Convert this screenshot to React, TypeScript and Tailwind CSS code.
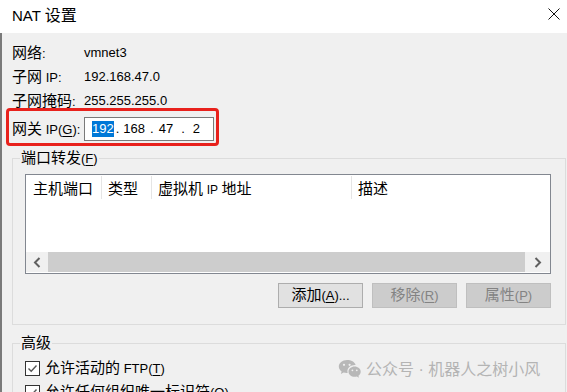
import React from "react";

const CJK_SPLIT = /([\u2E80-\u9FFF\uF900-\uFAFF\uFF01-\uFF60\u3000-\u303F]+)/;
const CJK_TEST = /^[\u2E80-\u9FFF\uF900-\uFAFF\uFF01-\uFF60\u3000-\u303F]+$/;

function T({ s }: { s: string }) {
  const parts = s.split(CJK_SPLIT);
  return (
    <>
      {parts.map((p, i) =>
        p === "" ? null : CJK_TEST.test(p) ? (
          <span key={i} className="text-[15px]">
            {p}
          </span>
        ) : (
          <span key={i}>{p}</span>
        )
      )}
    </>
  );
}

function U({ c }: { c: string }) {
  return <span className="underline underline-offset-[2px]">{c}</span>;
}

function Chevron({ dir }: { dir: "left" | "right" }) {
  return (
    <svg width="8" height="11" viewBox="0 0 8 11" fill="none">
      {dir === "left" ? (
        <polyline points="6.5,1 2,5.5 6.5,10" stroke="#606060" strokeWidth="2" />
      ) : (
        <polyline points="1.5,1 6,5.5 1.5,10" stroke="#606060" strokeWidth="2" />
      )}
    </svg>
  );
}

function Check() {
  return (
    <div className="w-[15px] h-[15px] border border-[#333333] bg-white flex items-center justify-center">
      <svg width="13" height="13" viewBox="0 0 13 13" fill="none">
        <polyline points="2.5,6.5 5.2,9.2 10.5,3.5" stroke="#555555" strokeWidth="1.4" />
      </svg>
    </div>
  );
}

export default function App() {
  return (
    <div className="w-[567px] h-[392px] overflow-hidden bg-[#f0f0f0] relative text-black text-[13px] leading-[18px] font-[family-name:'Liberation_Sans','Noto_Sans_CJK_SC',sans-serif]">
      {/* title bar */}
      <div className="h-[33px] bg-white flex justify-between pl-[12px] pr-[7px]">
        <div className="self-center pb-[2px] text-[15px]">
          NAT <span className="text-[16px]">设置</span>
        </div>
        <svg className="mt-[8px]" width="12" height="12" viewBox="0 0 12 12" fill="none">
          <line x1="0.5" y1="0.5" x2="11.5" y2="11.5" stroke="#111" strokeWidth="1" />
          <line x1="11.5" y1="0.5" x2="0.5" y2="11.5" stroke="#111" strokeWidth="1" />
        </svg>
      </div>

      {/* body */}
      <div className="border-l-2 border-[#7a7a7a] pl-[4px] pr-[1px] pt-[13px] h-[359px]">
        <div className="flex flex-col gap-[10px]">
          <div className="h-[14px] ml-[6px] flex items-center">
            <div className="w-[72px]">
              <T s="网络:" />
            </div>
            <div>vmnet3</div>
          </div>
          <div className="h-[14px] ml-[6px] flex items-center">
            <div className="w-[72px]">
              <T s="子网 IP:" />
            </div>
            <div>192.168.47.0</div>
          </div>
          <div className="h-[14px] ml-[6px] flex items-center">
            <div className="w-[72px]">
              <T s="子网掩码:" />
            </div>
            <div>255.255.255.0</div>
          </div>
        </div>

        {/* gateway row with red highlight */}
        <div className="w-[213px] h-[38px] border-[3px] border-[#e8211c] rounded-[4px] pl-[3px] pt-[6px] flex items-start">
          <div className="w-[72px] h-[24px] flex items-center">
            <span>
              <T s="网关 IP(" />
              <U c="G" />
              <span>):</span>
            </span>
          </div>
          <div className="w-[130px] h-[24px] border border-[#7a7a7a] bg-white flex items-center pl-[7px]">
            <span className="bg-[#0078d7] text-white leading-[16px]">192</span>
            <span className="ml-[2px]">.</span>
            <span className="ml-[4px]">168</span>
            <span className="ml-[5px]">.</span>
            <span className="ml-[5px]">47</span>
            <span className="ml-[8px]">.</span>
            <span className="ml-[8px]">2</span>
          </div>
        </div>

        {/* port forwarding */}
        <fieldset className="mt-[3px] ml-[6px] border border-[#dcdcdc]">
          <legend className="ml-[7px] px-[1px] leading-[18px]">
            <T s="端口转发(" />
            <U c="F" />
            <span>)</span>
          </legend>
          <div className="pl-[12px] pr-[14px] pt-[6px] pb-[16px]">
            <div className="h-[100px] border border-[#828790] bg-white flex flex-col">
              <div className="h-[25px] flex">
                <div className="w-[75px] pl-[7px] pt-[3px] flex items-center">
                  <span>
                    <T s="主机端口" />
                  </span>
                </div>
                <div className="w-px h-[23px] bg-[#e5e5e5] self-center" />
                <div className="w-[49px] pl-[6px] pt-[3px] flex items-center">
                  <span>
                    <T s="类型" />
                  </span>
                </div>
                <div className="w-px h-[23px] bg-[#e5e5e5] self-center" />
                <div className="w-[199px] pl-[6px] pt-[3px] flex items-center">
                  <span>
                    <T s="虚拟机 " />
                    <span className="text-[12px]">IP</span>
                    <T s=" 地址" />
                  </span>
                </div>
                <div className="w-px h-[23px] bg-[#e5e5e5] self-center" />
                <div className="flex-1 pl-[6px] pt-[3px] flex items-center">
                  <span>
                    <T s="描述" />
                  </span>
                </div>
              </div>
              <div className="flex-1" />
              <div className="h-[20px] mb-px flex">
                <div className="w-[22px] bg-[#f0f0f0] flex items-center justify-center">
                  <Chevron dir="left" />
                </div>
                <div className="w-[477px] bg-[#cdcdcd]" />
                <div className="flex-1 bg-[#f0f0f0] flex items-center justify-center">
                  <Chevron dir="right" />
                </div>
              </div>
            </div>
            <div className="mt-[9px] flex justify-end gap-[9px]">
              <div className="w-[85px] h-[25px] bg-[#e1e1e1] border border-[#adadad] flex items-center justify-center">
                <span>
                  <T s="添加(" />
                  <U c="A" />
                  <span>)...</span>
                </span>
              </div>
              <div className="w-[85px] h-[25px] bg-[#cccccc] border border-[#bfbfbf] text-[#838383] flex items-center justify-center">
                <span>
                  <T s="移除(" />
                  <U c="R" />
                  <span>)</span>
                </span>
              </div>
              <div className="w-[85px] h-[25px] bg-[#cccccc] border border-[#bfbfbf] text-[#838383] flex items-center justify-center">
                <span>
                  <T s="属性(" />
                  <U c="P" />
                  <span>)</span>
                </span>
              </div>
            </div>
          </div>
        </fieldset>

        {/* advanced */}
        <fieldset className="mt-[9px] ml-[6px] border border-[#dcdcdc]">
          <legend className="ml-[7px] px-[1px] leading-[18px]">
            <T s="高级" />
          </legend>
          <div className="pl-[12px] pt-[6px] flex flex-col gap-[6px] pb-[10px]">
            <div className="h-[18px] flex items-center gap-[5px]">
              <Check />
              <div>
                <T s="允许活动的 FTP(" />
                <U c="T" />
                <span>)</span>
              </div>
            </div>
            <div className="h-[18px] flex items-center gap-[5px]">
              <Check />
              <div>
                <T s="允许任何组织唯一标识符(" />
                <U c="O" />
                <span>)</span>
              </div>
            </div>
          </div>
        </fieldset>
      </div>

      {/* watermark */}
      <div className="absolute left-[338px] top-[358px] flex items-center gap-[5px] text-[#b4b4b4] font-[family-name:'Noto_Sans_CJK_SC',sans-serif] text-[16px] leading-[20px]">
        <svg width="23" height="20" viewBox="0 0 23 20">
          <path
            d="M9 1C4.3 1 0.8 4 0.8 7.6c0 2 1.1 3.8 2.8 5l-0.7 2.3 2.7-1.4c1 0.3 2.1 0.5 3.2 0.5 0.3 0 0.6 0 0.9 0-0.2-0.6-0.3-1.2-0.3-1.8 0-3.5 3.3-6.3 7.4-6.3 0.3 0 0.5 0 0.8 0C16.8 3 13.2 1 9 1z"
            fill="#b8b8b8"
          />
          <circle cx="6" cy="5.8" r="1.1" fill="#f0f0f0" />
          <circle cx="11.6" cy="5.8" r="1.1" fill="#f0f0f0" />
          <path
            d="M16.6 7.6c-3.4 0-6.1 2.3-6.1 5.1s2.7 5.1 6.1 5.1c0.8 0 1.5-0.1 2.2-0.3l2.2 1.2-0.6-1.9c1.4-0.9 2.3-2.4 2.3-4.1 0-2.8-2.7-5.1-6.1-5.1z"
            fill="#b8b8b8"
          />
          <circle cx="14.4" cy="11.3" r="0.9" fill="#f0f0f0" />
          <circle cx="18.8" cy="11.3" r="0.9" fill="#f0f0f0" />
        </svg>
        <span>
          公众号<span className="font-[family-name:'Liberation_Sans',sans-serif]"> · </span>机器人之树小风
        </span>
      </div>
    </div>
  );
}
